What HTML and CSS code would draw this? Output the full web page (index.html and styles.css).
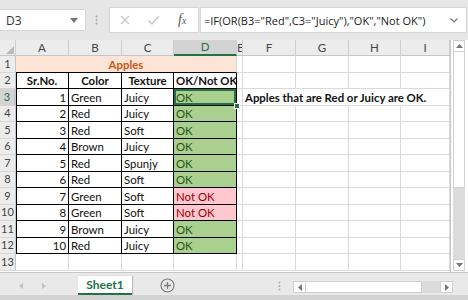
FILE: index.html
```html
<!DOCTYPE html>
<html lang="en">
<head>
  <meta charset="UTF-8">
  <title>Apples - Excel</title>
  <link rel="stylesheet" href="styles.css">
</head>
<body>

<div class="window">
  <div class="formula-bar">
    <div class="name-box">
      <span>D3</span>
      <svg class="caret" width="8" height="5" viewBox="0 0 8 5"><path d="M0 0h8L4 5z" fill="#777"/></svg>
    </div>
    <svg class="grip" width="3" height="10" viewBox="0 0 3 10"><circle cx="1.5" cy="1.5" r="1" fill="#aaa"/><circle cx="1.5" cy="5" r="1" fill="#aaa"/><circle cx="1.5" cy="8.5" r="1" fill="#aaa"/></svg>
    <div class="fx-buttons">
      <svg class="fx-btn" width="12" height="12" viewBox="0 0 12 12"><path d="M2 2l8 8M10 2l-8 8" stroke="#c4c4c4" stroke-width="1.3"/></svg>
      <svg class="fx-btn" width="13" height="12" viewBox="0 0 13 12"><path d="M1.5 6.5l3.5 3.5 7-8" stroke="#c4c4c4" stroke-width="1.3" fill="none"/></svg>
      <span class="fx-label">f<small>x</small></span>
    </div>
    <div class="formula-input">
      <span>=IF(OR(B3="Red",C3="Juicy"),"OK","Not OK")</span>
      <svg class="expand" width="8" height="5" viewBox="0 0 8 5"><path d="M0.5 0.5l3.5 3.5 3.5-3.5" stroke="#777" stroke-width="1.2" fill="none"/></svg>
    </div>
  </div>

  <div class="sheet">
    <table class="grid">
      <colgroup>
        <col style="width:16px"><col style="width:53px"><col style="width:53px"><col style="width:52px"><col style="width:63px">
        <col style="width:6px"><col style="width:53px"><col style="width:53px"><col style="width:52px"><col style="width:49px">
      </colgroup>
      <tr class="col-heads">
        <th class="corner"><svg width="8" height="8" viewBox="0 0 8 8"><path d="M8 0v8H0z" fill="#b9b9b9"/></svg></th>
        <th>A</th><th>B</th><th>C</th><th class="active">D</th><th class="clip">E</th><th>F</th><th>G</th><th>H</th><th>I</th>
      </tr>
      <tr>
        <th class="rh">1</th>
        <td colspan="4" class="title">Apples</td><td></td><td></td><td></td><td></td><td></td>
      </tr>
      <tr>
        <th class="rh">2</th>
        <td class="b first hdr">Sr.No.</td><td class="b hdr">Color</td><td class="b hdr">Texture</td><td class="b hdr">OK/Not OK</td>
        <td></td><td></td><td></td><td></td><td></td>
      </tr>
      <tr>
        <th class="rh active">3</th>
        <td class="b first num">1</td><td class="b">Green</td><td class="b">Juicy</td><td class="b ok sel">OK</td>
        <td></td><td class="note">Apples that are Red or Juicy are OK.</td><td class="spill"></td><td class="spill"></td><td></td>
      </tr>
      <tr>
        <th class="rh">4</th>
        <td class="b first num">2</td><td class="b">Red</td><td class="b">Juicy</td><td class="b ok">OK</td>
        <td></td><td></td><td></td><td></td><td></td>
      </tr>
      <tr>
        <th class="rh">5</th>
        <td class="b first num">3</td><td class="b">Red</td><td class="b">Soft</td><td class="b ok">OK</td>
        <td></td><td></td><td></td><td></td><td></td>
      </tr>
      <tr>
        <th class="rh">6</th>
        <td class="b first num">4</td><td class="b">Brown</td><td class="b">Juicy</td><td class="b ok">OK</td>
        <td></td><td></td><td></td><td></td><td></td>
      </tr>
      <tr>
        <th class="rh">7</th>
        <td class="b first num">5</td><td class="b">Red</td><td class="b">Spunjy</td><td class="b ok">OK</td>
        <td></td><td></td><td></td><td></td><td></td>
      </tr>
      <tr>
        <th class="rh">8</th>
        <td class="b first num">6</td><td class="b">Red</td><td class="b">Soft</td><td class="b ok">OK</td>
        <td></td><td></td><td></td><td></td><td></td>
      </tr>
      <tr>
        <th class="rh">9</th>
        <td class="b first num">7</td><td class="b">Green</td><td class="b">Soft</td><td class="b bad">Not OK</td>
        <td></td><td></td><td></td><td></td><td></td>
      </tr>
      <tr>
        <th class="rh">10</th>
        <td class="b first num">8</td><td class="b">Green</td><td class="b">Soft</td><td class="b bad">Not OK</td>
        <td></td><td></td><td></td><td></td><td></td>
      </tr>
      <tr>
        <th class="rh">11</th>
        <td class="b first num">9</td><td class="b">Brown</td><td class="b">Juicy</td><td class="b ok">OK</td>
        <td></td><td></td><td></td><td></td><td></td>
      </tr>
      <tr>
        <th class="rh">12</th>
        <td class="b first num">10</td><td class="b">Red</td><td class="b">Juicy</td><td class="b ok">OK</td>
        <td></td><td></td><td></td><td></td><td></td>
      </tr>
      <tr>
        <th class="rh">13</th>
        <td></td><td></td><td></td><td></td><td></td><td></td><td></td><td></td><td></td>
      </tr>
    </table>

    <div class="vscroll">
      <div class="sb-btn"><svg width="7" height="4" viewBox="0 0 7 4"><path d="M0 4L3.5 0 7 4z" fill="#777"/></svg></div>
      <div class="sb-thumb"></div>
      <div class="sb-track"></div>
      <div class="sb-btn"><svg width="7" height="4" viewBox="0 0 7 4"><path d="M0 0h7L3.5 4z" fill="#777"/></svg></div>
    </div>
  </div>

  <div class="tab-bar">
    <div class="tab-nav">
      <svg width="4" height="6" viewBox="0 0 4 6"><path d="M4 0v6L0 3z" fill="#c2c2c2"/></svg>
      <svg width="4" height="6" viewBox="0 0 4 6"><path d="M0 0v6l4-3z" fill="#c2c2c2"/></svg>
    </div>
    <div class="tab">Sheet1</div>
    <svg class="add-sheet" width="15" height="15" viewBox="0 0 15 15">
      <circle cx="7.5" cy="7.5" r="6.5" fill="none" stroke="#7a7a7a" stroke-width="1.1"/>
      <path d="M7.5 4v7M4 7.5h7" stroke="#7a7a7a" stroke-width="1.3"/>
    </svg>
    <svg class="tab-grip" width="3" height="10" viewBox="0 0 3 10"><circle cx="1.5" cy="1.5" r="1" fill="#b0b0b0"/><circle cx="1.5" cy="5" r="1" fill="#b0b0b0"/><circle cx="1.5" cy="8.5" r="1" fill="#b0b0b0"/></svg>
    <div class="hscroll">
      <div class="sb-btn"><svg width="4" height="7" viewBox="0 0 4 7"><path d="M4 0v7L0 3.5z" fill="#777"/></svg></div>
      <div class="sb-thumb"></div>
      <div class="sb-track"></div>
      <div class="sb-btn"><svg width="4" height="7" viewBox="0 0 4 7"><path d="M0 0v7l4-3.5z" fill="#777"/></svg></div>
    </div>
  </div>
  <div class="status-bar"></div>
</div>

</body>
</html>
```

FILE: styles.css
```css
body {
  margin: 0;
  font-family: Lato, "Liberation Sans", sans-serif;
}

.window {
  width: 468px;
  height: 300px;
  overflow: hidden;
  background: #e6e6e6;
  display: flex;
  flex-direction: column;
}

/* formula bar */

.formula-bar {
  height: 40px;
  display: flex;
  align-items: center;
  flex-shrink: 0;
}

.name-box {
  width: 86px;
  height: 22px;
  box-sizing: border-box;
  background: #fff;
  border: 1px solid #d6d6d6;
  border-left: none;
  display: flex;
  align-items: center;
  justify-content: space-between;
  padding: 0 7px 0 6px;
  font-family: "Open Sans", sans-serif;
  font-size: 12px;
  color: #333;
}

.caret {
  margin-top: 1px;
}

.grip {
  margin: 0 11px 0 9px;
}

.fx-buttons {
  width: 90px;
  height: 26px;
  box-sizing: border-box;
  background: #fff;
  border: 1px solid #d6d6d6;
  display: flex;
  align-items: center;
  padding-left: 9px;
}

.fx-btn {
  margin-right: 16px;
}

.fx-label {
  font-family: "Liberation Serif", serif;
  font-style: italic;
  font-size: 14px;
  color: #555;
  margin-left: 2px;
}

.fx-label small {
  font-size: 10px;
}

.formula-input {
  flex: 1;
  height: 26px;
  box-sizing: border-box;
  background: #fff;
  border: 1px solid #d6d6d6;
  margin: 0 1px 0 1px;
  display: flex;
  align-items: center;
  justify-content: space-between;
  padding: 0 8px 0 3px;
  font-family: "Open Sans", sans-serif;
  font-size: 11px;
  color: #222;
  white-space: nowrap;
}

/* grid */

.sheet {
  height: 232px;
  display: flex;
  flex-shrink: 0;
  background: #fff;
}

.grid {
  width: 450px;
  table-layout: fixed;
  border-collapse: separate;
  border-spacing: 0;
  align-self: flex-start;
  font-size: 11.4px;
  color: #111;
}

.grid tr {
  height: 16.5px;
}

.grid tr.col-heads {
  height: 16px;
}

.grid th,
.grid td {
  padding: 0 2px;
  border-right: 1px solid #dadada;
  border-bottom: 1px solid #dadada;
  white-space: nowrap;
  overflow: hidden;
  line-height: 14px;
  vertical-align: bottom;
}

.col-heads th {
  background: #ececec;
  border-right-color: #cfcfcf;
  border-bottom-color: #c6c6c6;
  font-weight: normal;
  font-size: 11.5px;
  color: #444;
  vertical-align: middle;
}

.col-heads th.active {
  background: #d3d3d3;
  color: #217346;
  border-bottom: 2px solid #217346;
}

.col-heads th.clip {
  padding: 0;
  text-align: left;
}

.corner {
  text-align: right;
  vertical-align: bottom !important;
  padding: 0 1px 1px 0 !important;
  line-height: 0 !important;
}

.rh {
  background: #ececec;
  border-right-color: #c6c6c6 !important;
  border-bottom-color: #d6d6d6 !important;
  font-weight: normal;
  font-size: 11px;
  color: #444;
  text-align: center;
  padding: 0 !important;
  vertical-align: middle !important;
}

.rh.active {
  background: #d3d3d3;
  color: #217346;
  border-right: 2px solid #217346;
}

.title {
  background: #fce4d6;
  border-bottom-color: #000 !important;
  color: #c65911;
  font-weight: bold;
  text-align: center;
}

.b {
  border-right-color: #000 !important;
  border-bottom-color: #000 !important;
}

.first {
  box-shadow: inset 1px 0 #000;
}

.hdr {
  font-weight: bold;
  text-align: center;
}

.num {
  text-align: right;
}

.ok {
  background: #a9d08e;
  color: #2d5020;
}

.bad {
  background: #ffc7ce;
  color: #9c0006;
}

.sel {
  position: relative;
  overflow: visible !important;
  box-shadow: inset 0 0 0 2px #217346;
}

.sel::after {
  content: "";
  position: absolute;
  right: -4px;
  bottom: -4px;
  width: 4px;
  height: 4px;
  background: #217346;
  border: 1px solid #fff;
}

.note {
  overflow: visible !important;
  font-weight: bold;
  border-right-color: transparent !important;
  padding-left: 3px;
}

.spill {
  border-right-color: transparent !important;
}

/* scrollbars */

.vscroll {
  flex: 1;
  display: flex;
  flex-direction: column;
  border-left: 1px solid #c6c6c6;
  padding: 0 3px 1px 2px;
  background: #fff;
}

.sb-btn {
  background: #fff;
  border: 1px solid #d0d0d0;
  display: flex;
  align-items: center;
  justify-content: center;
  flex-shrink: 0;
}

.vscroll .sb-btn {
  height: 10px;
}

.vscroll .sb-thumb {
  height: 135px;
  border: 1px solid #d0d0d0;
  border-top: none;
  background: #fff;
}

.sb-track {
  flex: 1;
  background: #dcdcdc;
}

/* sheet tabs */

.tab-bar {
  height: 23px;
  display: flex;
  align-items: center;
  padding-top: 3px;
  box-sizing: border-box;
  border-top: 1px solid #c6c6c6;
  background: #e9e9e9;
  flex-shrink: 0;
}

.tab-nav {
  width: 78px;
  display: flex;
  gap: 19px;
  padding-left: 19px;
  box-sizing: border-box;
}

.tab {
  width: 54px;
  align-self: stretch;
  box-sizing: border-box;
  background: #fff;
  border-bottom: 2px solid #217346;
  box-shadow: 1px 0 1px #bbb;
  color: #217346;
  font-weight: bold;
  font-size: 12px;
  display: flex;
  align-items: center;
  justify-content: center;
}

.add-sheet {
  margin-left: 28px;
}

.tab-grip {
  margin-left: 103px;
}

.hscroll {
  margin-left: 12px;
  width: 160px;
  height: 12px;
  margin-top: 3px;
  display: flex;
}

.hscroll .sb-btn {
  width: 11px;
}

.hscroll .sb-thumb {
  width: 115px;
  border: 1px solid #d0d0d0;
  border-left: none;
  background: #fff;
}

.status-bar {
  flex: 1;
  background: #d2d2d2;
}
```
